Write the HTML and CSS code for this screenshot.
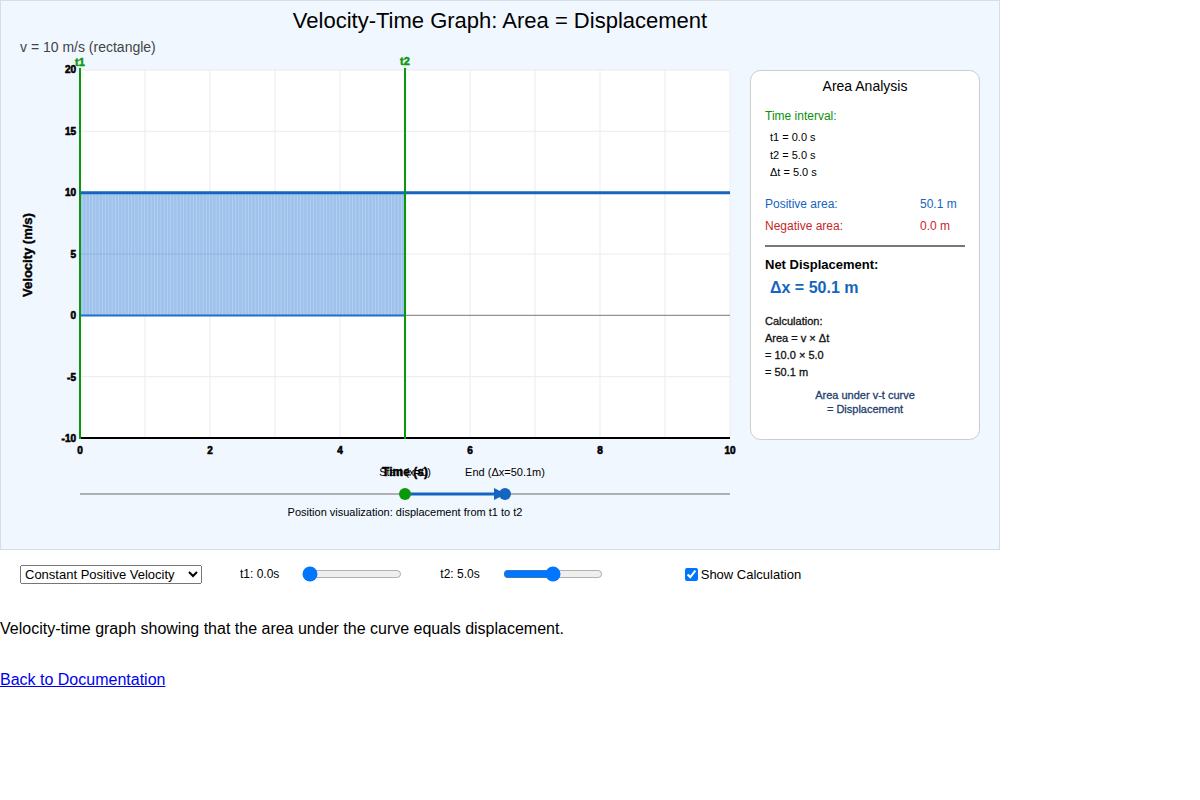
FILE: index.html
```html
<!DOCTYPE html>
<html>
<head>
<meta charset="utf-8">
<title>Velocity-Time Graph</title>
<link rel="stylesheet" href="styles.css">
</head>
<body>
<div class="chart-box">
<svg class="chart" width="1000" height="550" viewBox="0 0 1000 550" xmlns="http://www.w3.org/2000/svg">
  <defs>
    <pattern id="stripes" x="80" y="0" width="3.25" height="10" patternUnits="userSpaceOnUse">
      <rect x="0" y="0" width="3.25" height="10" fill="#b9d4f3"/>
      <rect x="0" y="0" width="2.5" height="10" fill="#9ec2ec"/>
    </pattern>
  </defs>
  <text class="title" x="500" y="28" text-anchor="middle">Velocity-Time Graph: Area = Displacement</text>
  <text class="subtitle" x="20" y="52">v = 10 m/s (rectangle)</text>

  <rect x="80" y="70" width="650" height="368" fill="#ffffff"/>
  <g class="grid">
    <line x1="80" y1="70" x2="730" y2="70"/>
    <line x1="80" y1="131.3" x2="730" y2="131.3"/>
    <line x1="80" y1="192.7" x2="730" y2="192.7"/>
    <line x1="80" y1="254" x2="730" y2="254"/>
    <line x1="80" y1="376.7" x2="730" y2="376.7"/>
    <line x1="145" y1="70" x2="145" y2="438"/>
    <line x1="210" y1="70" x2="210" y2="438"/>
    <line x1="275" y1="70" x2="275" y2="438"/>
    <line x1="340" y1="70" x2="340" y2="438"/>
    <line x1="405" y1="70" x2="405" y2="438"/>
    <line x1="470" y1="70" x2="470" y2="438"/>
    <line x1="535" y1="70" x2="535" y2="438"/>
    <line x1="600" y1="70" x2="600" y2="438"/>
    <line x1="665" y1="70" x2="665" y2="438"/>
    <line x1="730" y1="70" x2="730" y2="438"/>
  </g>
  <line x1="80" y1="315.3" x2="730" y2="315.3" stroke="#777" stroke-width="1"/>

  <rect x="80" y="192.7" width="325" height="122.6" fill="url(#stripes)"/>
  <line x1="80" y1="315.5" x2="405" y2="315.5" stroke="#1e6fcc" stroke-width="2"/>
  <line x1="80" y1="254" x2="405" y2="254" stroke="#7fa6d6" stroke-width="1" opacity="0.5"/>
  <line x1="80" y1="192.7" x2="730" y2="192.7" stroke="#1565c0" stroke-width="3"/>

  <line x1="80" y1="438" x2="730" y2="438" stroke="#000" stroke-width="2"/>
  <line x1="80" y1="68" x2="80" y2="439" stroke="#0a990a" stroke-width="2"/>
  <line x1="405" y1="68" x2="405" y2="439" stroke="#0a990a" stroke-width="2"/>
  <text class="marker" x="80" y="66" text-anchor="middle">t1</text>
  <text class="marker" x="405" y="65" text-anchor="middle">t2</text>

  <g class="tick">
    <text x="76" y="73" text-anchor="end">20</text>
    <text x="76" y="135" text-anchor="end">15</text>
    <text x="76" y="196" text-anchor="end">10</text>
    <text x="76" y="258" text-anchor="end">5</text>
    <text x="76" y="319" text-anchor="end">0</text>
    <text x="76" y="381" text-anchor="end">-5</text>
    <text x="76" y="442" text-anchor="end">-10</text>
    <text x="80" y="454" text-anchor="middle">0</text>
    <text x="210" y="454" text-anchor="middle">2</text>
    <text x="340" y="454" text-anchor="middle">4</text>
    <text x="470" y="454" text-anchor="middle">6</text>
    <text x="600" y="454" text-anchor="middle">8</text>
    <text x="730" y="454" text-anchor="middle">10</text>
  </g>
  <text class="axis-title y-title" x="32" y="255" text-anchor="middle" transform="rotate(-90 32 255)">Velocity (m/s)</text>

  <text class="small" x="405" y="476" text-anchor="middle">Start (x=0)</text>
  <text class="axis-title" x="405" y="476" text-anchor="middle">Time (s)</text>
  <text class="small" x="505" y="476" text-anchor="middle">End (Δx=50.1m)</text>
  <line x1="80" y1="494" x2="730" y2="494" stroke="#999" stroke-width="1.5"/>
  <line x1="405" y1="494" x2="500" y2="494" stroke="#1565c0" stroke-width="3"/>
  <polygon points="494,488 506,494 494,500" fill="#1565c0"/>
  <circle cx="405" cy="494" r="6" fill="#0a990a"/>
  <circle cx="505" cy="494" r="6" fill="#1565c0"/>
  <text class="small" x="405" y="516" text-anchor="middle">Position visualization: displacement from t1 to t2</text>

  <rect x="750.5" y="70.5" width="229" height="369" rx="10" fill="#fff" stroke="#ccc"/>
  <text class="panel-title" x="865" y="91" text-anchor="middle">Area Analysis</text>
  <text class="p12 green" x="765" y="120">Time interval:</text>
  <text class="p11" x="770" y="141">t1 = 0.0 s</text>
  <text class="p11" x="770" y="159">t2 = 5.0 s</text>
  <text class="p11" x="770" y="176">Δt = 5.0 s</text>
  <text class="p12 blue" x="765" y="208">Positive area:</text>
  <text class="p12 blue" x="920" y="208">50.1 m</text>
  <text class="p12 red" x="765" y="230">Negative area:</text>
  <text class="p12 red" x="920" y="230">0.0 m</text>
  <line x1="765" y1="246" x2="965" y2="246" stroke="#777" stroke-width="2"/>
  <text class="net" x="765" y="269">Net Displacement:</text>
  <text class="net-value" x="770" y="293">Δx = 50.1 m</text>
  <text class="calc" x="765" y="325">Calculation:</text>
  <text class="calc" x="765" y="342">Area = v × Δt</text>
  <text class="calc" x="765" y="359">= 10.0 × 5.0</text>
  <text class="calc" x="765" y="376">= 50.1 m</text>
  <text class="note" x="865" y="399" text-anchor="middle">Area under v-t curve</text>
  <text class="note" x="865" y="413" text-anchor="middle">= Displacement</text>
</svg>
</div>

<div class="controls">
  <select class="preset">
    <option>Constant Positive Velocity</option>
    <option>Constant Negative Velocity</option>
    <option>Uniform Acceleration</option>
  </select>
  <div class="control-group">
    <span class="ctrl-label">t1: 0.0s</span>
    <input class="slider" type="range" min="0" max="10" step="0.1" value="0">
  </div>
  <div class="control-group">
    <span class="ctrl-label">t2: 5.0s</span>
    <input class="slider" type="range" min="0" max="10" step="0.1" value="5">
  </div>
  <label class="check">
    <input type="checkbox" checked>
    <span>Show Calculation</span>
  </label>
</div>

<p class="description">Velocity-time graph showing that the area under the curve equals displacement.</p>
<p class="back"><a href="#">Back to Documentation</a></p>
</body>
</html>
```

FILE: styles.css
```css
html, body {
  margin: 0;
  padding: 0;
  background: #fff;
  font-family: "Liberation Sans", Arial, sans-serif;
  color: #000;
}

.chart-box {
  width: 1000px;
  height: 550px;
  outline: 1px solid #d6dde4;
  outline-offset: -1px;
  background: #f0f7ff;
  overflow: hidden;
}

.chart {
  display: block;
  font-family: "Liberation Sans", Arial, sans-serif;
}

.title { font-size: 22px; fill: #000; }
.subtitle { font-size: 14px; fill: #444; }
.grid line { stroke: #ebebeb; stroke-width: 1; }
.marker { font-size: 11px; font-weight: bold; fill: #0a990a; stroke: #0a990a; stroke-width: 0.5; }
.tick text { font-size: 10px; font-weight: bold; fill: #000; stroke: #000; stroke-width: 0.6; }
.axis-title { font-size: 12px; font-weight: bold; fill: #000; stroke: #000; stroke-width: 0.4; }
.y-title { font-size: 13px; }
.small { font-size: 11px; fill: #000; }
.panel-title { font-size: 14px; fill: #000; }
.p12 { font-size: 12px; }
.p11 { font-size: 11px; fill: #000; }
.green { fill: #0a900a; }
.blue { fill: #1565c0; }
.red { fill: #c62828; }
.net { font-size: 13px; font-weight: bold; fill: #000; }
.net-value { font-size: 16px; font-weight: bold; fill: #1565c0; }
.calc { font-size: 11px; fill: #111; stroke: #111; stroke-width: 0.3; }
.note { font-size: 11px; fill: #1f3f6e; stroke: #1f3f6e; stroke-width: 0.3; }

.controls {
  display: flex;
  align-items: center;
  padding: 14px 20px 20px;
  height: 20px;
}

.preset {
  width: 182px;
  height: 19px;
  font-size: 13px;
  font-family: "Liberation Sans", Arial, sans-serif;
  margin: 0 38px 0 0;
}

.control-group {
  display: flex;
  align-items: center;
  margin-right: 38px;
}

.ctrl-label {
  font-size: 12px;
  margin-right: 23px;
}

.slider {
  width: 100px;
  margin: 0;
}

.check {
  display: flex;
  align-items: center;
  margin-left: 44px;
  font-size: 13px;
}

.check input {
  margin: 0 3px 0 0;
  width: 13px;
  height: 13px;
}

.description {
  font-size: 16px;
  margin: 16px 0 0;
}

.back {
  font-size: 16px;
  margin: 33px 0 0;
}

.back a { color: #0000ee; }
```
